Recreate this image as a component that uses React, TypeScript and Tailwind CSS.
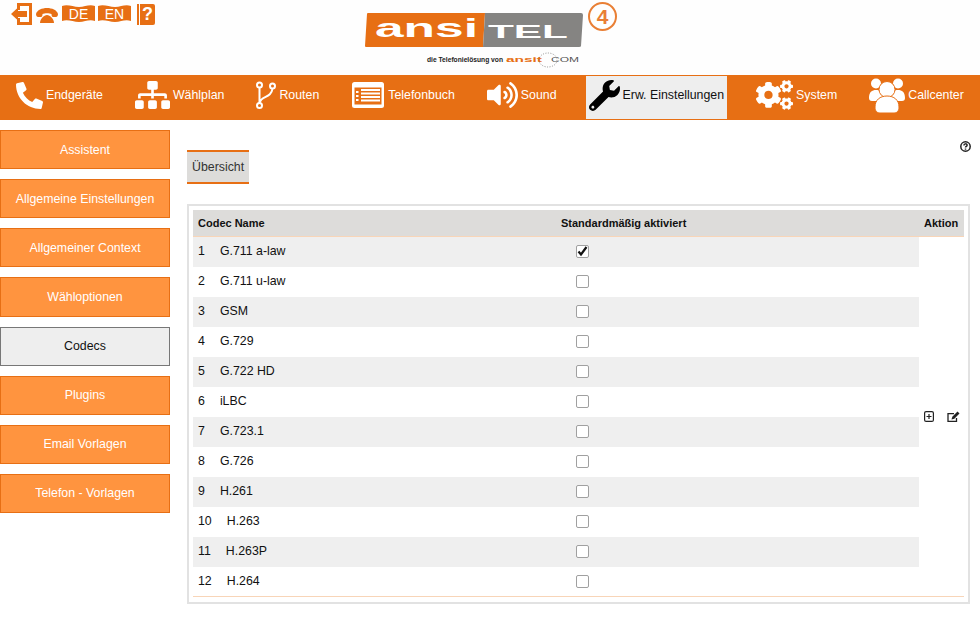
import { FaPhone, FaSitemap, FaVolumeUp, FaWrench, FaCogs } from 'react-icons/fa';
import type { ReactNode } from 'react';

const font = 'font-["Liberation_Sans",Arial,sans-serif]';
const svgFont = "'Liberation Sans',sans-serif";

const RouteIcon = () => (
  <svg width="20" height="28" viewBox="0 0 20 28" fill="none" stroke="#fff" strokeWidth="2">
    <circle cx="3.500" cy="4" r="2.500" />
    <circle cx="16.500" cy="5" r="2.500" />
    <circle cx="3.500" cy="24.500" r="2.500" />
    <path d="M3.500 6.500v15.500M4 21c1-6 11.500-4 12.500-13.500" />
  </svg>
);

const BookIcon = () => (
  <svg width="34" height="28" viewBox="0 0 34 28">
    <rect x="1" y="1" width="32" height="26" rx="2.500" fill="#fff" />
    <rect x="3.500" y="6.500" width="27" height="17" fill="#e76f14" />
    <rect x="5" y="10" width="2.500" height="2" fill="#fff" />
    <rect x="5" y="14" width="2.500" height="2" fill="#fff" />
    <rect x="5" y="18" width="2.500" height="2" fill="#fff" />
    <rect x="10" y="8" width="19" height="2" fill="#fff" />
    <rect x="10" y="11.500" width="19" height="2" fill="#fff" />
    <rect x="10" y="15" width="19" height="2" fill="#fff" />
    <rect x="10" y="18.500" width="19" height="2" fill="#fff" />
  </svg>
);

const PeopleIcon = () => (
  <svg width="36" height="36" viewBox="0 0 36 36">
    <circle cx="7" cy="6.500" r="5" fill="#fff" />
    <circle cx="29" cy="6.500" r="5" fill="#fff" />
    <path d="M0 21c0-6 3-8 7-8s7 2 7 8v3H3c-2 0-3-1-3-3zM22 21c0-6 3-8 7-8s7 2 7 8c0 2-1 3-3 3H22z" fill="#fff" />
    <circle cx="18" cy="12.500" r="8" fill="#fff" stroke="#e76f14" strokeWidth="1" />
    <path d="M6 30c0-7 5-11 12-11s12 4 12 11c0 4-2 6-5 6H11c-3 0-5-2-5-6z" fill="#fff" stroke="#e76f14" strokeWidth="1" />
  </svg>
);

const navItems: { label: string; icon: ReactNode; active?: boolean }[] = [
  { label: 'Endgeräte', icon: <FaPhone className="w-[27px] h-[27px] text-white -scale-x-100" /> },
  { label: 'Wählplan', icon: <FaSitemap className="w-[35px] h-[30px] text-white" /> },
  { label: 'Routen', icon: <RouteIcon /> },
  { label: 'Telefonbuch', icon: <BookIcon /> },
  { label: 'Sound', icon: <FaVolumeUp className="w-[31px] h-[28px] text-white" /> },
  { label: 'Erw. Einstellungen', icon: <FaWrench className="w-[31px] h-[31px] text-black" />, active: true },
  { label: 'System', icon: <FaCogs className="w-[37px] h-[34px] text-white" /> },
  { label: 'Callcenter', icon: <PeopleIcon /> },
];

const sideItems = [
  'Assistent',
  'Allgemeine Einstellungen',
  'Allgemeiner Context',
  'Wähloptionen',
  'Codecs',
  'Plugins',
  'Email Vorlagen',
  'Telefon - Vorlagen',
];

const codecs = ['G.711 a-law', 'G.711 u-law', 'GSM', 'G.729', 'G.722 HD', 'iLBC', 'G.723.1', 'G.726', 'H.261', 'H.263', 'H.263P', 'H.264'];

const Flag = ({ label }: { label: string }) => (
  <svg width="33" height="18" viewBox="0 0 33 18">
    <path d="M0 1c6-2 11 1 17 1s10-3 16-1v15c-6-2-10 1-16 1S6 14 0 16z" fill="#e76f14" />
    <text x="16.500" y="14" textAnchor="middle" fill="#fff" fontFamily={svgFont} fontSize="14">{label}</text>
  </svg>
);

const TopIcons = () => (
  <div className="flex items-center pl-[11px] pt-[3px]">
    <svg width="21" height="22" viewBox="0 0 21 22">
      <path d="M6 0h15v22H6v-7h3v4h9V3H9v4H6z" fill="#e76f14" />
      <path d="M0 11l7-6.500V8h9v6H7v3.500z" fill="#e76f14" />
    </svg>
    <svg width="22" height="17" viewBox="0 0 22 17" className="ml-[4px]">
      <path d="M0 8C2 0 20 0 22 8c0 2-1 3-2 3h-3c-1 0-1.500-1-1.500-3-2-1-7-1-9 0 0 2-.5 3-1.500 3H2C1 11 0 10 0 8z" fill="#e76f14" />
      <path d="M4 17c0-4 4-8 7-8s7 4 7 8z" fill="#e76f14" />
    </svg>
    <span className="ml-[4px]"><Flag label="DE" /></span>
    <span className="ml-[3px]"><Flag label="EN" /></span>
    <span className="ml-[6px] flex h-[21px] items-stretch gap-[1px]">
      <span className="w-[2px] bg-[#e76f14]" />
      <span className="flex w-[15px] items-center justify-center rounded-r-[2px] bg-[#e76f14] text-white text-[18px] font-bold leading-none">?</span>
    </span>
  </div>
);

const Logo = () => (
  <div className="relative w-[254px] h-[56px]">
    <svg width="218" height="56" viewBox="0 0 218 56" className="block">
      <path d="M2 1Q2 0 3 0H120L118 34H1Q0 34 0 33z" fill="#e76f14" />
      <path d="M120 0H216Q218 0 218 2L216 33Q216 34 214 34H118z" fill="#858482" />
      <text x="10" y="24" fill="#fff" fontFamily={svgFont} fontWeight="700" fontSize="26" textLength="103" lengthAdjust="spacingAndGlyphs">ansi</text>
      <text x="123" y="24.500" fill="#fff" fontFamily={svgFont} fontWeight="700" fontSize="19" textLength="80" lengthAdjust="spacingAndGlyphs">TEL</text>
      <text x="62" y="49" fill="#222" fontFamily={svgFont} fontWeight="700" fontSize="7" textLength="76" lengthAdjust="spacingAndGlyphs">die Telefonielösung von</text>
      <text x="141" y="49" fill="#e76f14" fontFamily={svgFont} fontWeight="700" fontSize="8" textLength="36" lengthAdjust="spacingAndGlyphs">ansit</text>
      <text x="186" y="49" fill="#555" fontFamily={svgFont} fontSize="7" textLength="28" lengthAdjust="spacingAndGlyphs">COM</text>
      <ellipse cx="183" cy="47" rx="9" ry="7" fill="none" stroke="#777" strokeWidth="0.8" strokeDasharray="1 1.500" />
    </svg>
    <span className="absolute left-[223px] top-[-11px] flex w-[29px] h-[29px] items-center justify-center rounded-full border-[2px] border-[#e97f35] text-[#e97f35] text-[21px] font-bold leading-none">4</span>
  </div>
);

const Checkbox = ({ checked }: { checked?: boolean }) => (
  <span className="flex w-[13px] h-[13px] -mt-[1px] items-center justify-center rounded-[2px] border border-[#a0a0a0] bg-white">
    {checked && (
      <svg width="11" height="11" viewBox="0 0 11 11" fill="none" stroke="#111" strokeWidth="2.200">
        <path d="M1.500 5.500l2.500 3L9.500 1" />
      </svg>
    )}
  </span>
);

const HelpIcon = () => (
  <svg width="11" height="11" viewBox="0 0 11 11" fill="none" stroke="#222" strokeWidth="1.500">
    <circle cx="5.500" cy="5.500" r="4.700" />
    <path d="M3.900 4.400c0-2 3.200-2 3.200-.2 0 1.200-1.600 1.200-1.600 2.400" />
    <path d="M5.500 7.500v1.200" />
  </svg>
);

const PlusIcon = () => (
  <svg width="10" height="11" viewBox="0 0 10 11" fill="none" stroke="#222" strokeWidth="1.200">
    <rect x="0.600" y="0.600" width="8.800" height="9.800" rx="1.500" />
    <path d="M2.500 5.500h5M5 3v5" />
  </svg>
);

const EditIcon = () => (
  <svg width="13" height="12" viewBox="0 0 13 12" fill="none">
    <path d="M9.500 7v3.400H1V2.600h6" stroke="#222" strokeWidth="1.300" />
    <path d="M4.500 8.500l.8-2.800L10.500.5l2 2-5.200 5.200z" fill="#222" />
  </svg>
);

export default function App() {
  return (
    <div className={`${font} w-[980px] h-[619px] overflow-hidden bg-white text-[12.35px] text-[#111]`}>
      {/* Header */}
      <div className="relative h-[75px] bg-[#fefefe]">
        <TopIcons />
        <div className="absolute left-[365px] top-[13px]">
          <Logo />
        </div>
      </div>

      {/* Main nav */}
      <nav className="flex h-[45px] gap-[26px] pl-[13px] bg-[#e76f14]">
        {navItems.map((item) => (
          <div
            key={item.label}
            className={`flex items-center gap-[3px] px-[3px] my-[1px] pb-[5px] ${item.active ? 'bg-[#eeeeee] text-[#111]' : 'text-white'}`}
          >
            <span className="flex items-center justify-center">{item.icon}</span>
            <span className="whitespace-nowrap">{item.label}</span>
          </div>
        ))}
      </nav>

      <div className="flex">
        {/* Side menu */}
        <aside className="w-[170px] pt-[10px] flex flex-col gap-[10px]">
          {sideItems.map((label) => {
            const active = label === 'Codecs';
            return (
              <div
                key={label}
                className={`flex h-[39.14px] pt-[0.6px] items-center justify-center border ${
                  active ? 'bg-[#eeeeee] border-[#777] text-[#111]' : 'bg-[#ff943f] border-[#e76f14] text-white'
                }`}
              >
                {label}
              </div>
            );
          })}
        </aside>

        {/* Content */}
        <main className="relative flex-1 pl-[17px] pr-[10px] pt-[30px]">
          <span className="absolute right-[9px] top-[21px]"><HelpIcon /></span>
          <div className="inline-flex h-[34px] items-center pl-[5px] pr-[5px] bg-[#dddcda] border-y-2 border-[#e76f14] text-[#333]">Übersicht</div>

          <div className="mt-[20px] h-[400px] border-2 border-[#e2e2e2] px-[4px] pt-[4px]">
            <table className="w-[771px] border-separate border-spacing-0 table-fixed">
              <thead>
                <tr className="text-[11px] font-bold">
                  <th className="w-[368px] h-[27px] pl-[5px] text-left bg-[#dddcda] border-b border-[#f8d5b8]">Codec Name</th>
                  <th className="w-[358px] h-[27px] text-left bg-[#dddcda] border-b border-[#f8d5b8]">Standardmäßig aktiviert</th>
                  <th className="h-[27px] text-left pl-[5px] bg-[#dddcda] border-b border-[#f8d5b8]">Aktion</th>
                </tr>
              </thead>
              <tbody>
                {codecs.map((name, i) => (
                  <tr key={name}>
                    <td className={`h-[30px] pl-[5px] pb-[1px] ${i % 2 === 0 ? 'bg-[#efefef]' : ''} ${i === 11 ? 'border-b border-[#f8d5b8]' : ''}`}>
                      {i + 1}
                      <span className="ml-[15px]">{name}</span>
                    </td>
                    <td className={`h-[30px] pl-[15px] ${i % 2 === 0 ? 'bg-[#efefef]' : ''} ${i === 11 ? 'border-b border-[#f8d5b8]' : ''}`}>
                      <Checkbox checked={i === 0} />
                    </td>
                    {i === 0 && (
                      <td rowSpan={12} className="align-middle border-b border-[#f8d5b8]">
                        <div className="flex items-center gap-[13px] pl-[5px]">
                          <PlusIcon />
                          <EditIcon />
                        </div>
                      </td>
                    )}
                  </tr>
                ))}
              </tbody>
            </table>
          </div>
        </main>
      </div>
    </div>
  );
}
